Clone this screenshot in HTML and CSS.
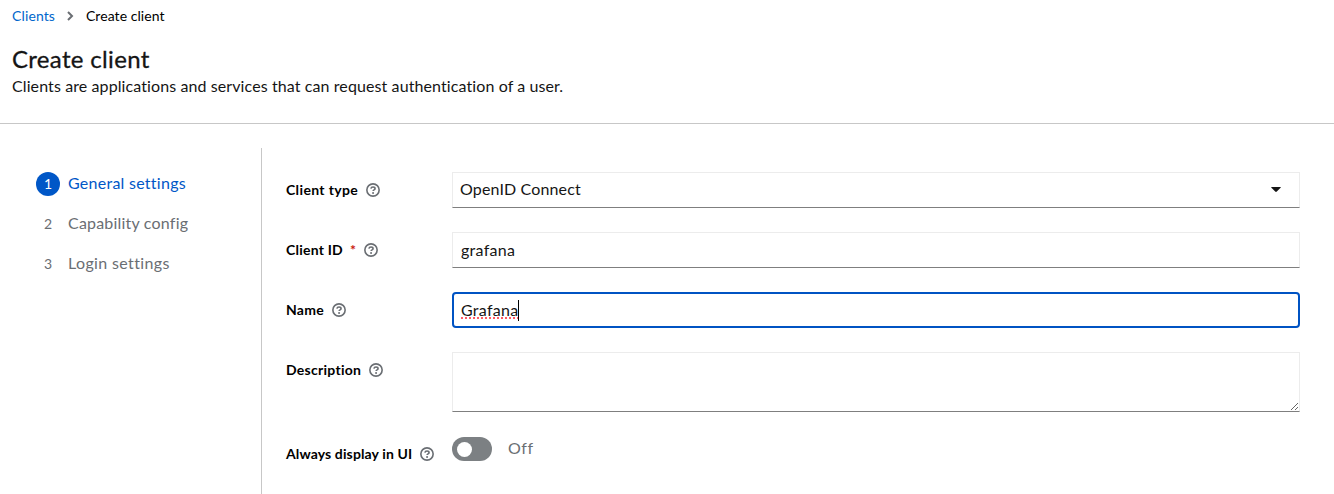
FILE: index.html
```html
<!DOCTYPE html>
<html lang="en">
<head>
<meta charset="utf-8">
<title>Create client</title>
<link rel="stylesheet" href="styles.css">
</head>
<body>
<svg class="defs" width="0" height="0">
  <symbol id="help" viewBox="0 0 14 14">
    <circle cx="7" cy="7" r="6.15" fill="none" stroke="currentColor" stroke-width="1.6"/>
    <path d="M4.9 5.6C5.1 4.5 6 4.05 7 4.05c1.2 0 2.05.65 2.05 1.6C9.05 6.9 7.1 6.9 7.1 8.1" fill="none" stroke="currentColor" stroke-width="1.6"/>
    <circle cx="7.05" cy="9.9" r="1" fill="currentColor"/>
  </symbol>
</svg>
<header class="page-header">
  <nav class="breadcrumb">
    <a class="crumb-link">Clients</a>
    <svg class="crumb-sep" width="7" height="10" viewBox="0 0 7 10"><path d="M1 1l4 4-4 4" fill="none" stroke="currentColor" stroke-width="2"/></svg>
    <span class="crumb-current">Create client</span>
  </nav>
  <h1 class="title">Create client</h1>
  <p class="intro">Clients are applications and services that can request authentication of a user.</p>
</header>
<main class="wizard">
  <ol class="steps">
    <li class="step current"><span class="num">1</span><span class="s1">General settings</span></li>
    <li class="step"><span class="num">2</span><span class="s2">Capability config</span></li>
    <li class="step"><span class="num">3</span><span class="s3">Login settings</span></li>
  </ol>
  <form class="form">
    <div class="row">
      <div class="label"><span class="l1">Client type</span><svg class="help"><use href="#help"/></svg></div>
      <div class="control select"><span class="value-type">OpenID Connect</span><svg class="caret" width="10" height="6" viewBox="0 0 10 6"><path d="M.7 0h8.6q.8 0 .3.7L5.8 4.6q-.8.8-1.6 0L.4.7Q-.1 0 .7 0z" fill="currentColor"/></svg></div>
    </div>
    <div class="row">
      <div class="label"><span class="l2">Client ID</span><span class="required">*</span><svg class="help"><use href="#help"/></svg></div>
      <div class="control"><span class="value-id">grafana</span></div>
    </div>
    <div class="row">
      <div class="label"><span class="l3">Name</span><svg class="help"><use href="#help"/></svg></div>
      <div class="control focused"><span class="value-name">Grafana</span><span class="cursor"></span></div>
    </div>
    <div class="row area-row">
      <div class="label"><span class="l4">Description</span><svg class="help"><use href="#help"/></svg></div>
      <textarea class="control area"></textarea>
    </div>
    <div class="row">
      <div class="label"><span class="l5">Always display in UI</span><svg class="help"><use href="#help"/></svg></div>
      <div class="switch"><span class="track"><span class="knob"></span></span><span class="off">Off</span></div>
    </div>
  </form>
</main>
</body>
</html>
```

FILE: styles.css
```css
* { box-sizing: border-box; }
body { margin: 0; height: 494px; overflow: hidden; display: flex; flex-direction: column; background: #fff; color: #151515; font: 16px/24px Lato, sans-serif; font-variant-ligatures: none; white-space: nowrap; }
.defs { position: absolute; }
.page-header { height: 124px; flex: none; padding: 5px 12px 0; border-bottom: 1px solid #c7c7c7; }
.breadcrumb { display: flex; align-items: center; height: 21px; font-size: 14px; line-height: 21px; }
.crumb-link { width: 43px; color: #06c; letter-spacing: .12px; }
.crumb-current { letter-spacing: .06px; color: #000; }
.crumb-sep { margin: 1px 12px 0 12px; color: #6a6e73; }
.title { margin: 18px 0 0; font-size: 24px; line-height: 30px; font-weight: 400; letter-spacing: .33px; -webkit-text-stroke: .3px currentColor; }
.intro { margin: 0; line-height: 24px; letter-spacing: .1px; }
.wizard { display: flex; flex: 1; padding-top: 24px; }
.steps { list-style: none; width: 262px; margin: 0; padding: 24px 0 0 36px; border-right: 1px solid #c7c7c7; display: flex; flex-direction: column; gap: 16px; }
.step { display: flex; gap: 8px; height: 24px; line-height: 22px; color: #6a6e73; }
.current { color: #0057c7; }
.num { width: 24px; height: 24px; border-radius: 50%; text-align: center; font-size: 14px; line-height: 24px; }
.current .num { background: #0057c7; color: #fff; }
.s1 { letter-spacing: .26px; }
.s2 { letter-spacing: .2px; }
.s3 { letter-spacing: .36px; }
.form { flex: 1; padding: 24px 34px 0 24px; }
.row { display: flex; height: 36px; margin-bottom: 24px; }
.label { width: 166px; flex: none; display: flex; align-items: center; height: 36px; font-size: 14px; font-weight: 700; color: #000; }
.l1 { letter-spacing: .36px; }
.l2 { letter-spacing: .22px; }
.l3 { letter-spacing: .25px; }
.l4 { letter-spacing: .27px; }
.l5 { letter-spacing: .12px; }
.help { width: 14px; height: 14px; margin-left: 8px; color: #6a6e73; }
.required { margin-left: 7px; width: 6px; color: #c9190b; }
.control { flex: 1; display: flex; align-items: center; padding: 0 8px; border: 1px solid #ececec; border-bottom-color: #7f7f7f; background: #fff; }
.select { padding: 0 18px 2px 7px; justify-content: space-between; }
.caret { margin-top: 2px; }
.value-type { letter-spacing: .14px; }
.value-id, .value-name { letter-spacing: .27px; }
.focused { border: 2px solid #0053c3; border-radius: 4px; padding: 0 7px; }
.value-name { line-height: 18px; text-decoration: underline dotted #ff5a64 2px; text-underline-offset: 1px; text-decoration-skip-ink: none; }
.cursor { width: 1px; height: 21px; background: #000; }
.area-row { height: 60px; }
.area { resize: vertical; outline: 0; margin: 0; }
.switch { display: flex; height: 24px; margin-top: 1px; align-items: center; gap: 16px; color: #6a6e73; }
.track { width: 40px; height: 24px; padding: 4.5px; border-radius: 12px; background: #7c8083; }
.knob { display: block; width: 15px; height: 15px; border-radius: 50%; background: #fff; }
.off { line-height: 22px; margin-bottom: 2px; letter-spacing: .6px; }
```
